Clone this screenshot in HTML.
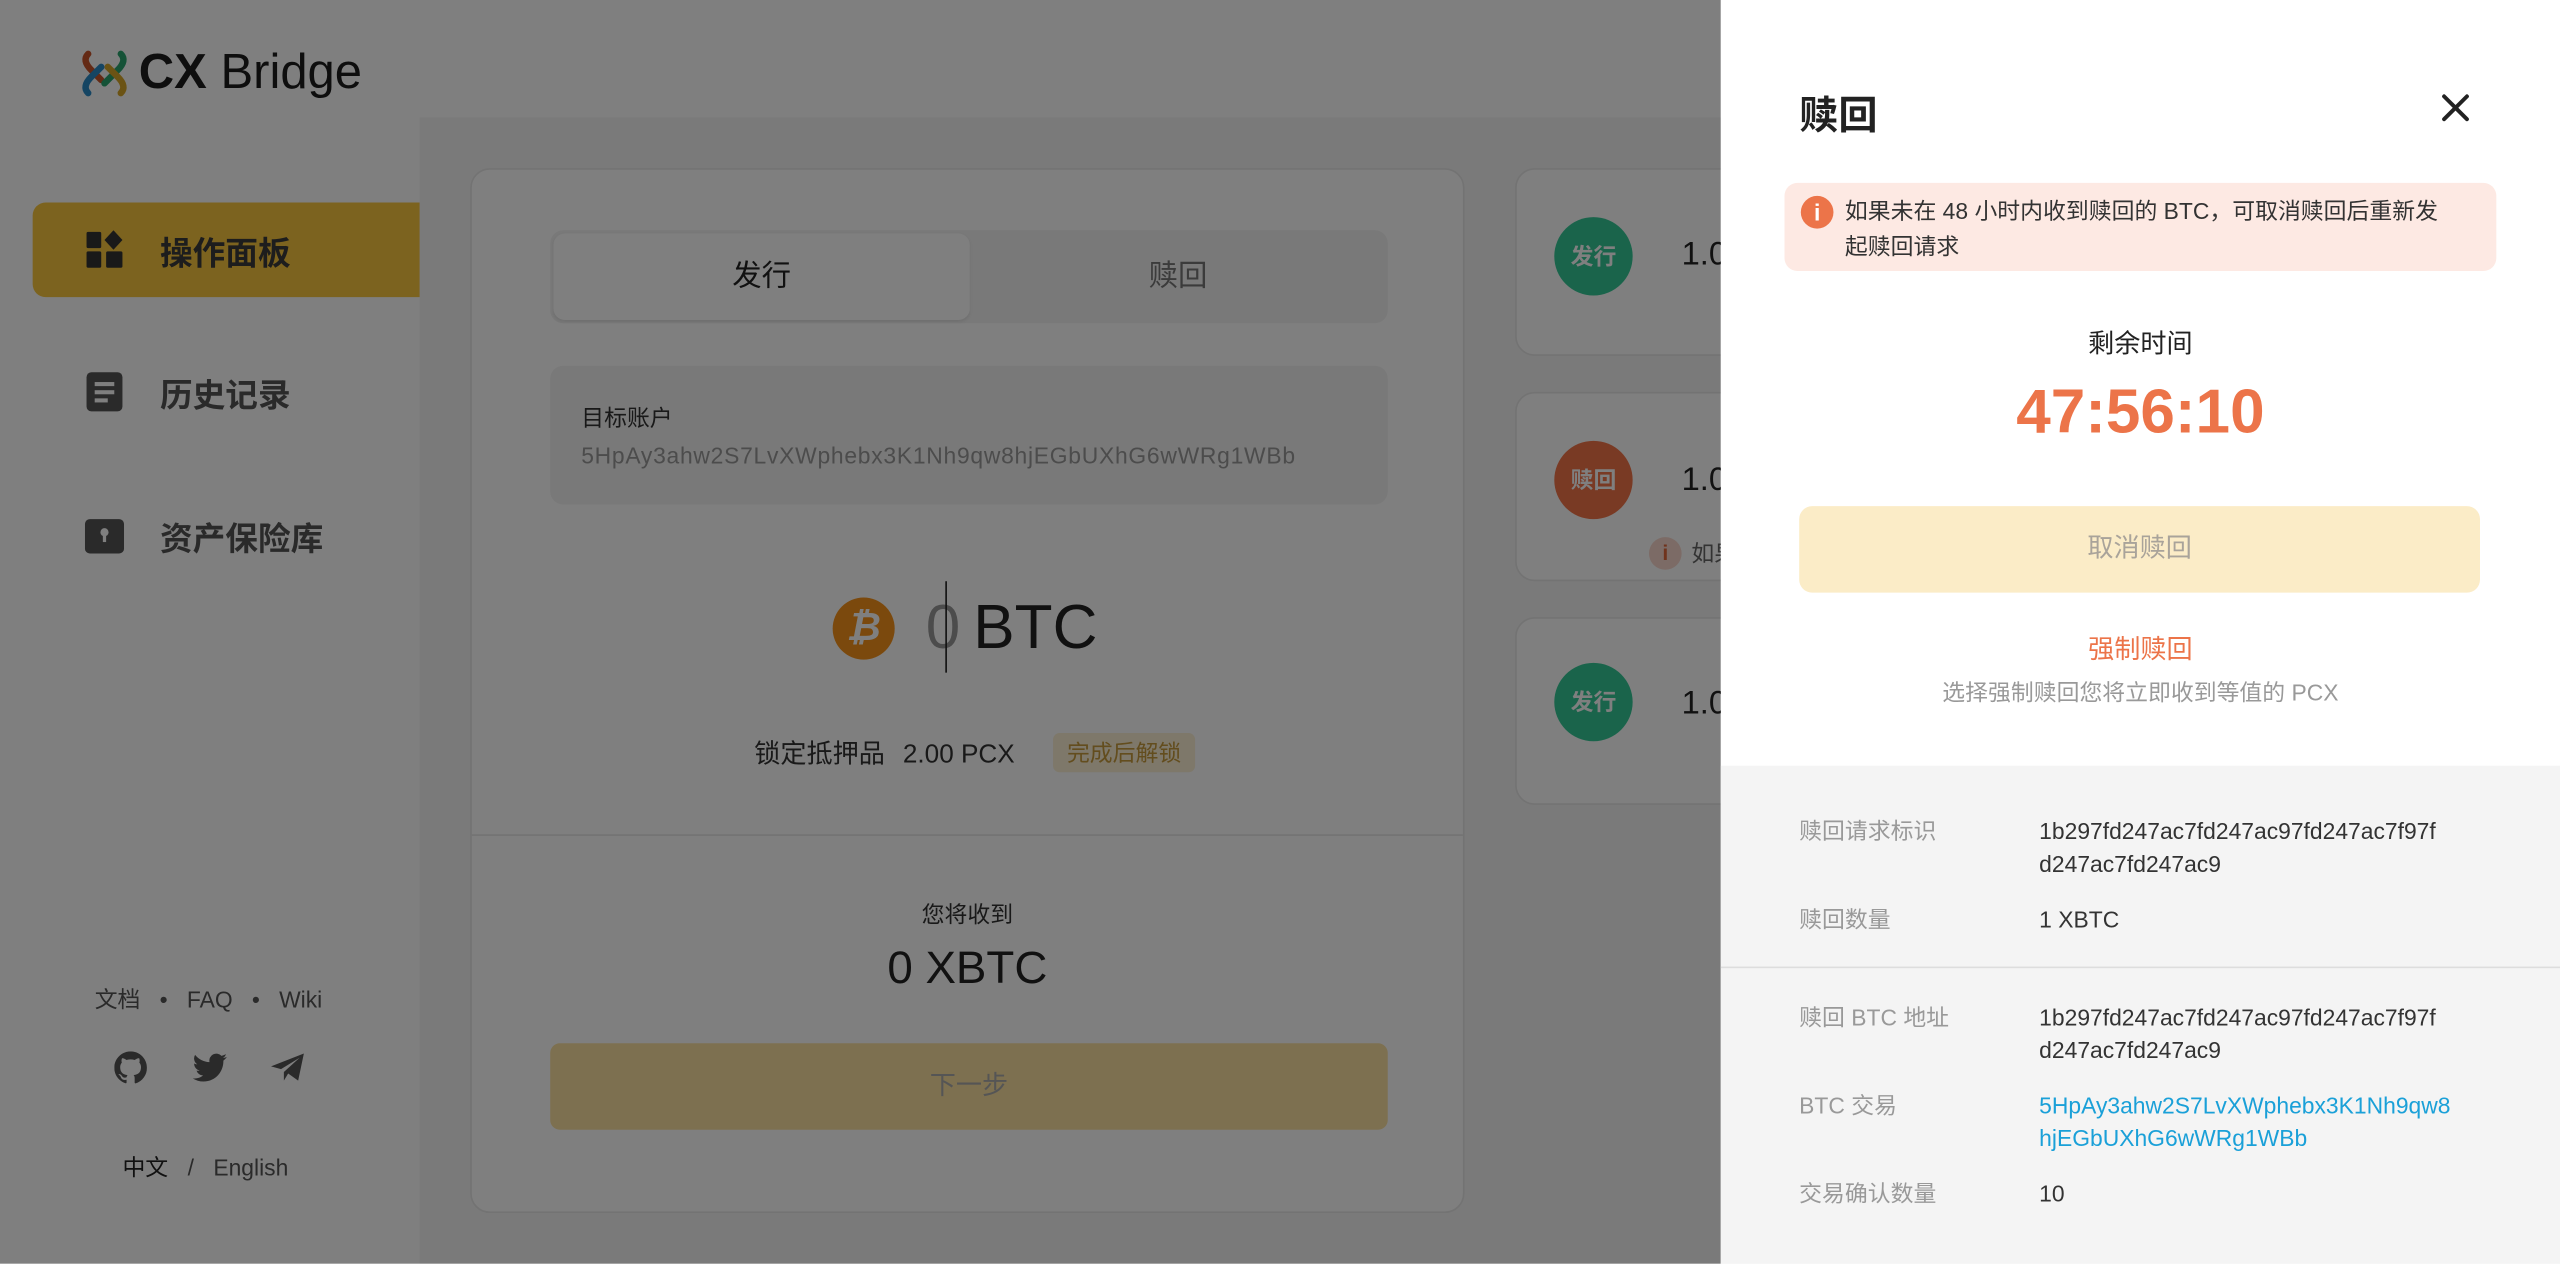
<!DOCTYPE html>
<html><head><meta charset="utf-8">
<style>
*{margin:0;padding:0;box-sizing:border-box}
html,body{width:2560px;height:1264px;overflow:hidden;background:#fff}
#w{position:absolute;left:0;top:0;width:1568px;height:774px;transform:scale(1.632653);transform-origin:0 0;font-family:"Liberation Sans","Noto Sans CJK SC",sans-serif;color:#333}
.a{position:absolute}
.nav{position:absolute;left:20px;width:237px;height:58px;display:flex;align-items:center;padding-left:32px;font-size:20px;font-weight:bold;color:#3a3a3a}
.nav svg{margin-right:22px}
.card{position:absolute;background:#fff;border:1px solid #e6e6e6;border-radius:12px}
.circ{position:absolute;width:48px;height:48px;border-radius:50%;color:#fff;font-size:14px;font-weight:bold;display:flex;align-items:center;justify-content:center}
.lbl{position:absolute;left:48px;font-size:14px;color:#999}
.val{position:absolute;left:195px;width:300px;font-size:14px;line-height:20px;color:#333;white-space:nowrap}
</style></head><body><div id="w">
<div class="a" style="left:0;top:0;width:1568px;height:774px;background:#fff"></div>
<div class="a" style="left:257px;top:72px;width:1311px;height:702px;background:#f4f4f4"></div>
<svg class="a" style="left:48px;top:29px" width="32" height="32" viewBox="0 0 32 32" fill="none" stroke-width="4" stroke-linecap="round">
<path d="M6 4 Q2 8 8 14 L14 20" stroke="#c9552a"/>
<path d="M26 4 Q30 8 24 14 L16 22" stroke="#2aa56e"/>
<path d="M6 28 Q2 24 8 18 L14 12" stroke="#2a8ac6"/>
<path d="M26 28 Q30 24 24 18 L18 12" stroke="#d6a629"/>
</svg>
<div class="a" style="left:85px;top:27px;font-size:30px;color:#1c1c1c;line-height:36px"><b>CX</b> <span style="font-weight:300">Bridge</span></div>
<div class="nav" style="top:124px;background:#f9c63f;border-radius:8px 0 0 8px">
<svg width="24" height="24" viewBox="0 0 24 24" fill="#333"><rect x="1" y="1" width="9" height="10" rx="1"/><path d="M17.5 0 L23 6 L17.5 12 L12 6Z"/><rect x="1" y="13" width="9" height="10" rx="1"/><rect x="13" y="13" width="10" height="10" rx="1"/></svg>操作面板</div>
<div class="nav" style="top:211px;color:#555">
<svg width="24" height="26" viewBox="0 0 24 26"><rect x="1" y="1" width="22" height="24" rx="3" fill="#555"/><rect x="6" y="7" width="12" height="2.5" fill="#fff"/><rect x="6" y="12" width="12" height="2.5" fill="#fff"/><rect x="6" y="17" width="8" height="2.5" fill="#fff"/></svg>历史记录</div>
<div class="nav" style="top:299px;color:#555">
<svg width="24" height="24" viewBox="0 0 24 24"><rect x="0" y="2" width="24" height="21" rx="3" fill="#555"/><circle cx="12" cy="10" r="2.5" fill="#fff"/><rect x="11" y="10" width="2" height="6" fill="#fff"/></svg>资产保险库</div>
<div class="a" style="left:58px;top:602px;font-size:14px;color:#555;word-spacing:2px">文档 &nbsp;•&nbsp; FAQ &nbsp;•&nbsp; Wiki</div>
<svg class="a" style="left:70px;top:644px" width="20" height="20" viewBox="0 0 16 16" fill="#555"><path d="M8 0C3.58 0 0 3.58 0 8c0 3.54 2.29 6.53 5.47 7.59.4.07.55-.17.55-.38v-1.33c-2.23.48-2.7-1.07-2.7-1.07-.36-.93-.89-1.17-.89-1.17-.73-.5.05-.49.05-.49.8.06 1.23.83 1.23.83.71 1.23 1.87.87 2.33.66.07-.52.28-.87.5-1.07-1.78-.2-3.65-.89-3.65-3.95 0-.87.31-1.59.82-2.15-.08-.2-.36-1.02.08-2.12 0 0 .67-.21 2.2.82a7.6 7.6 0 014 0c1.53-1.04 2.2-.82 2.2-.82.44 1.1.16 1.92.08 2.12.51.56.82 1.27.82 2.15 0 3.07-1.87 3.75-3.65 3.95.29.25.54.73.54 1.48v2.2c0 .21.15.46.55.38A8.01 8.01 0 0016 8c0-4.42-3.58-8-8-8z"/></svg>
<svg class="a" style="left:118px;top:645px" width="21" height="18" viewBox="0 0 24 20" fill="#555"><path d="M24 2.4a9.8 9.8 0 01-2.8.8A4.9 4.9 0 0023.3.5a9.9 9.9 0 01-3.1 1.2A4.9 4.9 0 0011.8 6.1 14 14 0 011.7 1a4.9 4.9 0 001.5 6.6 4.9 4.9 0 01-2.2-.6 4.9 4.9 0 003.9 4.9 4.9 4.9 0 01-2.2.1 4.9 4.9 0 004.6 3.4A9.9 9.9 0 010 17.4 14 14 0 007.5 19.6c9.1 0 14-7.5 14-14v-.6A10 10 0 0024 2.4z"/></svg>
<svg class="a" style="left:166px;top:645px" width="21" height="18" viewBox="0 0 24 20" fill="#555"><path d="M0 9 L23 0 L19 19 L12 14 L9 19 L9 13 L20 3 L7 11Z"/></svg>
<div class="a" style="left:75px;top:705px;font-size:14px;color:#222">中文 <span style="color:#555;margin:0 8px">/</span> <span style="color:#555">English</span></div>
<div class="card" style="left:288px;top:103px;width:609px;height:640px">
<div class="a" style="left:48px;top:37px;width:513px;height:57px;background:#f2f2f2;border-radius:8px"></div>
<div class="a" style="left:50px;top:39px;width:255px;height:53px;background:#fff;border-radius:7px;box-shadow:0 1px 2px rgba(0,0,0,.08);text-align:center;line-height:53px;font-size:18px;color:#222">发行</div>
<div class="a" style="left:305px;top:39px;width:255px;height:53px;text-align:center;line-height:53px;font-size:18px;color:#777">赎回</div>
<div class="a" style="left:48px;top:120px;width:513px;height:85px;background:#f2f2f2;border-radius:8px">
<div class="a" style="left:19px;top:22px;font-size:14px;color:#333">目标账户</div>
<div class="a" style="left:19px;top:47px;font-size:14px;color:#999;letter-spacing:.45px">5HpAy3ahw2S7LvXWphebx3K1Nh9qw8hjEGbUXhG6wWRg1WBb</div></div>
<div class="a" style="left:221px;top:262px;width:38px;height:38px;border-radius:50%;background:#f7931a;color:#fff;font-weight:bold;font-size:24px;text-align:center;line-height:38px;font-style:italic">₿</div>
<div class="a" style="left:278px;top:258px;font-size:38px;line-height:46px;color:#222"><span style="color:#999;margin-right:8px">0</span>BTC</div>
<div class="a" style="left:290px;top:252px;width:1px;height:56px;background:#222"></div>
<div class="a" style="left:173px;top:344px;font-size:16px;color:#333;white-space:nowrap">锁定抵押品<span style="margin-left:11px">2.00 PCX</span></div>
<div class="a" style="left:356px;top:345px;width:87px;height:24px;background:#fcf0d4;border-radius:4px;font-size:14px;color:#c69a3c;text-align:center;line-height:24px">完成后解锁</div>
<div class="a" style="left:0;top:407px;width:607px;height:1px;background:#e6e6e6"></div>
<div class="a" style="left:0;top:446px;width:607px;text-align:center;font-size:14px;color:#333">您将收到</div>
<div class="a" style="left:0;top:473px;width:607px;text-align:center;font-size:28px;color:#222">0 XBTC</div>
<div class="a" style="left:48px;top:535px;width:513px;height:53px;background:#fae0a0;border-radius:6px;text-align:center;line-height:53px;font-size:16px;color:#aaa">下一步</div>
</div>
<div class="card" style="left:928px;top:103px;width:400px;height:115px"></div>
<div class="card" style="left:928px;top:240px;width:400px;height:116px"></div>
<div class="card" style="left:928px;top:378px;width:400px;height:115px"></div>
<div class="circ" style="left:952px;top:133px;background:#35c896">发行</div>
<div class="circ" style="left:952px;top:270px;background:#f27449">赎回</div>
<div class="circ" style="left:952px;top:406px;background:#35c896">发行</div>
<div class="a" style="left:1030px;top:145px;font-size:20px;color:#222">1.0</div>
<div class="a" style="left:1030px;top:283px;font-size:20px;color:#222">1.0</div>
<div class="a" style="left:1030px;top:420px;font-size:20px;color:#222">1.0</div>
<div class="a" style="left:1010px;top:329px;width:20px;height:20px;border-radius:50%;background:#f8d7cc;color:#e0663b;font-size:13px;font-weight:bold;text-align:center;line-height:20px">i</div>
<div class="a" style="left:1036px;top:329px;font-size:14px;color:#666">如果</div>
<div class="a" style="left:0;top:0;width:1054px;height:774px;background:rgba(0,0,0,.5)"></div>
<div class="a" style="left:1054px;top:0;width:514px;height:774px;background:#fff">
<div class="a" style="left:48px;top:51px;font-size:24px;font-weight:bold;color:#222">赎回</div>
<svg class="a" style="left:441px;top:57px" width="18" height="18" viewBox="0 0 18 18" stroke="#222" stroke-width="2.4" stroke-linecap="round"><path d="M2 2L16 16M16 2L2 16"/></svg>
<div class="a" style="left:39px;top:112px;width:436px;height:54px;background:#fde9e3;border-radius:8px">
<div class="a" style="left:10px;top:8px;width:20px;height:20px;border-radius:50%;background:#ec7449;color:#fff;font-size:14px;font-weight:bold;text-align:center;line-height:20px">i</div>
<div class="a" style="left:37px;top:6px;width:399px;font-size:14px;line-height:22px;color:#333;white-space:nowrap">如果未在 48 小时内收到赎回的 BTC，可取消赎回后重新发<br>起赎回请求</div></div>
<div class="a" style="left:0;top:197px;width:514px;text-align:center;font-size:16px;color:#222">剩余时间</div>
<div class="a" style="left:0;top:230px;width:514px;text-align:center;font-size:38px;font-weight:bold;color:#ec7449;line-height:46px">47:56:10</div>
<div class="a" style="left:48px;top:310px;width:417px;height:53px;background:#fbecc7;border-radius:8px;text-align:center;line-height:53px;font-size:16px;color:#a9a39a">取消赎回</div>
<div class="a" style="left:0;top:384px;width:514px;text-align:center;font-size:16px;color:#ec7449">强制赎回</div>
<div class="a" style="left:0;top:414px;width:514px;text-align:center;font-size:14px;color:#999">选择强制赎回您将立即收到等值的 PCX</div>
<div class="a" style="left:0;top:469px;width:514px;height:305px;background:#f4f4f4">
<div class="lbl" style="top:30px">赎回请求标识</div>
<div class="val" style="top:30px">1b297fd247ac7fd247ac97fd247ac7f97f<br>d247ac7fd247ac9</div>
<div class="lbl" style="top:84px">赎回数量</div>
<div class="val" style="top:84px">1 XBTC</div>
<div class="a" style="left:0;top:123px;width:514px;height:1px;background:#ddd"></div>
<div class="lbl" style="top:144px">赎回 BTC 地址</div>
<div class="val" style="top:144px">1b297fd247ac7fd247ac97fd247ac7f97f<br>d247ac7fd247ac9</div>
<div class="lbl" style="top:198px">BTC 交易</div>
<div class="val" style="top:198px;color:#1aa0d8">5HpAy3ahw2S7LvXWphebx3K1Nh9qw8<br>hjEGbUXhG6wWRg1WBb</div>
<div class="lbl" style="top:252px">交易确认数量</div>
<div class="val" style="top:252px">10</div>
</div>
</div>
</div></body></html>
